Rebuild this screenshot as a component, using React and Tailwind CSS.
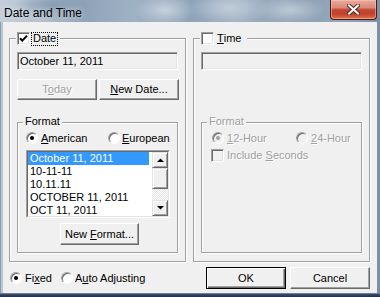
import React from "react";

function U({ children }) {
  return <span className="underline underline-offset-[1px] decoration-1">{children}</span>;
}

function Radio({ checked, disabled }) {
  return (
    <span
      className={
        disabled
          ? "inline-flex w-[12px] h-[12px] shrink-0 rounded-full items-center justify-center border border-t-[#a0a0a0] border-l-[#a0a0a0] border-r-white border-b-white bg-[#f0f0f0] shadow-[inset_1px_1px_0_#696969]"
          : "inline-flex w-[12px] h-[12px] shrink-0 rounded-full items-center justify-center border border-t-[#a0a0a0] border-l-[#a0a0a0] border-r-white border-b-white bg-white shadow-[inset_1px_1px_0_#696969]"
      }
    >
      {checked && (
        <span className={disabled ? "w-[4px] h-[4px] rounded-full bg-[#a0a0a0]" : "w-[4px] h-[4px] rounded-full bg-black"} />
      )}
    </span>
  );
}

function Check({ checked, disabled }) {
  return (
    <span
      className={
        disabled
          ? "inline-flex w-[13px] h-[13px] shrink-0 items-center justify-center border border-t-[#a0a0a0] border-l-[#a0a0a0] border-r-white border-b-white bg-[#f0f0f0] shadow-[inset_1px_1px_0_#696969,inset_-1px_-1px_0_#e3e3e3]"
          : "inline-flex w-[13px] h-[13px] shrink-0 items-center justify-center border border-t-[#a0a0a0] border-l-[#a0a0a0] border-r-white border-b-white bg-white shadow-[inset_1px_1px_0_#696969,inset_-1px_-1px_0_#e3e3e3]"
      }
    >
      {checked && (
        <svg width="9" height="9" viewBox="0 0 9 9">
          <path d="M1 4.2 L3.3 6.6 L8 1.6" stroke="black" strokeWidth="2" fill="none" />
        </svg>
      )}
    </span>
  );
}

function Btn({ children, className = "", disabled }) {
  return (
    <div
      className={
        "flex items-center justify-center bg-[#f0f0f0] border border-t-white border-l-white border-r-[#696969] border-b-[#696969] shadow-[inset_-1px_-1px_0_#a0a0a0] " +
        (disabled ? "text-[#a0a0a0] [text-shadow:1px_1px_0_#fff] " : "text-black ") +
        className
      }
    >
      <span className="whitespace-pre">{children}</span>
    </div>
  );
}

function Field({ children }) {
  return (
    <div className="w-[161px] h-[18px] flex items-center pl-[2px] bg-[#f0f0f0] border border-t-[#a0a0a0] border-l-[#a0a0a0] border-r-white border-b-white shadow-[inset_1px_1px_0_#696969,inset_-1px_-1px_0_#e3e3e3]">
      {children}
    </div>
  );
}

function Arrow({ up }) {
  return (
    <svg width="7" height="4" viewBox="0 0 7 4">
      {up ? <polygon points="0,4 7,4 3.5,0.5" fill="black" /> : <polygon points="0,0 7,0 3.5,3.5" fill="black" />}
    </svg>
  );
}

function SBtn({ children, className = "" }) {
  return (
    <div
      className={
        "flex items-center justify-center bg-[#f0f0f0] border border-t-[#e3e3e3] border-l-[#e3e3e3] border-r-[#696969] border-b-[#696969] shadow-[inset_1px_1px_0_#fff,inset_-1px_-1px_0_#a0a0a0] " +
        className
      }
    >
      {children}
    </div>
  );
}

export default function App() {
  const items = ["October 11, 2011", "10-11-11", "10.11.11", "OCTOBER 11, 2011", "OCT 11, 2011"];
  return (
    <div className="w-[380px] h-[297px] flex flex-col overflow-hidden bg-[#7d8fa6] font-['Liberation_Sans',Arial,sans-serif] text-[11px] leading-none text-black">
      {/* Title bar */}
      <div className="relative h-[22px] shrink-0 flex items-start pl-[4px] pt-[7px] bg-[radial-gradient(ellipse_40px_14px_at_55px_6px,#8398b0,transparent),radial-gradient(ellipse_30px_16px_at_165px_10px,#c6d1dc,transparent),radial-gradient(ellipse_40px_16px_at_230px_8px,#c1ccd8,transparent),radial-gradient(ellipse_35px_14px_at_290px_10px,#bdc9d5,transparent),linear-gradient(90deg,#c3ced9_0%,#aebdcc_12%,#8fa3b9_22%,#9fb1c4_35%,#8ea2b8_50%,#a0b1c3_62%,#8c9fb5_78%,#93a6ba_90%,#7c90a8_100%)]">
        <span className="relative text-[12px] leading-none [text-shadow:0_0_6px_rgba(255,255,255,0.9)]">Date and Time</span>
        <div className="absolute left-[330px] top-0 w-[47px] h-[20px] rounded-b-[4px] border border-t-0 border-[#4a1c16] shadow-[inset_0_0_0_1px_rgba(255,200,190,0.5)] bg-[linear-gradient(180deg,#e9ab9d_0%,#d98a7a_40%,#c24530_52%,#c4432c_75%,#e07550_100%)] flex items-center justify-center">
          <svg width="13" height="11" viewBox="0 0 13 11">
            <path d="M2 1.5 L11 9.5 M11 1.5 L2 9.5" stroke="#5a2a22" strokeWidth="4" strokeLinecap="square" />
            <path d="M2 1.5 L11 9.5 M11 1.5 L2 9.5" stroke="#ffffff" strokeWidth="2" strokeLinecap="square" />
          </svg>
        </div>
      </div>

      {/* Body with frame */}
      <div className="flex-1 flex px-[3px] bg-[linear-gradient(90deg,#60728a_0px,#b9c6d4_1px,#b9c6d4_3px,transparent_3px)]">
        <div className="w-[374px] h-[271px] bg-[#f0f0f0] pl-[6px] pr-[7px] pt-[16px] flex flex-col">
          <div className="flex gap-[7px] items-start">
            {/* Date group */}
            <div className="relative w-[177px] h-[224px] border border-[#a0a0a0] shadow-[inset_1px_1px_0_#fff,1px_1px_0_#fff] pl-[7px] pt-[13px] flex flex-col">
              <div className="absolute left-[6px] top-[-8px] h-[15px] flex items-center gap-[1px] bg-[#f0f0f0] pl-[1px] pr-[2px]">
                <Check checked />
                <span className="h-[14px] flex items-center border border-dotted border-black px-[1px]">Date</span>
              </div>
              <Field>October 11, 2011</Field>
              <div className="flex gap-[2px] mt-[9px]">
                <Btn disabled className="w-[80px] h-[21px]">
                  T<U>o</U>day
                </Btn>
                <Btn className="w-[80px] h-[21px]">
                  <U>N</U>ew Date...
                </Btn>
              </div>
              {/* Format group */}
              <div className="relative mt-[22px] w-[161px] h-[131px] border border-[#a0a0a0] shadow-[inset_1px_1px_0_#fff,1px_1px_0_#fff] pl-[8px] pt-[9px] flex flex-col">
                <span className="absolute left-[5px] top-[-8px] bg-[#f0f0f0] px-[2px] leading-[13px]">Format</span>
                <div className="flex items-center h-[12px]">
                  <div className="w-[82px] flex items-center gap-[3px]">
                    <Radio checked />
                    <span>
                      <U>A</U>merican
                    </span>
                  </div>
                  <div className="flex items-center gap-[2px]">
                    <Radio />
                    <span>
                      <U>E</U>uropean
                    </span>
                  </div>
                </div>
                {/* List */}
                <div className="mt-[6px] w-[144px] h-[68px] border border-t-[#a0a0a0] border-l-[#a0a0a0] border-r-white border-b-white">
                  <div className="w-full h-full flex bg-white border border-t-[#696969] border-l-[#696969] border-r-[#e3e3e3] border-b-[#e3e3e3]">
                    <div className="flex-1 flex flex-col">
                      {items.map((t, i) => (
                        <div
                          key={t}
                          className={
                            i === 0
                              ? "h-[13px] leading-[13px] pl-[2px] bg-[#3399ff] text-white mr-[3px]"
                              : "h-[13px] leading-[13px] pl-[2px] whitespace-nowrap"
                          }
                        >
                          {t}
                        </div>
                      ))}
                    </div>
                    <div className="w-[16px] flex flex-col">
                      <SBtn className="h-[16px]">
                        <Arrow up />
                      </SBtn>
                      <SBtn className="h-[21px]" />
                      <div className="flex-1 bg-[repeating-conic-gradient(#ffffff_0%_25%,#e3e3e3_0%_50%)] bg-[length:2px_2px]" />
                      <SBtn className="h-[16px]">
                        <Arrow />
                      </SBtn>
                    </div>
                  </div>
                </div>
                <Btn className="mt-[5px] ml-[34px] w-[79px] h-[22px]">
                  New <U>F</U>ormat...
                </Btn>
              </div>
            </div>

            {/* Time group */}
            <div className="relative w-[177px] h-[224px] border border-[#a0a0a0] shadow-[inset_1px_1px_0_#fff,1px_1px_0_#fff] pl-[7px] pt-[13px] flex flex-col">
              <div className="absolute left-[6px] top-[-8px] h-[15px] flex items-center gap-[1px] bg-[#f0f0f0] pl-[1px] pr-[4px]">
                <Check />
                <span className="h-[14px] flex items-center border border-transparent px-[1px]">
                  <U>T</U>ime
                </span>
              </div>
              <Field />
              <div className="relative mt-[52px] w-[161px] h-[131px] border border-[#a0a0a0] shadow-[inset_1px_1px_0_#fff,1px_1px_0_#fff] pl-[10px] pt-[9px] flex flex-col text-[#a0a0a0] [text-shadow:1px_1px_0_#fff]">
                <span className="absolute left-[5px] top-[-8px] bg-[#f0f0f0] px-[2px] leading-[13px]">Format</span>
                <div className="flex items-center h-[12px]">
                  <div className="w-[84px] flex items-center gap-[3px]">
                    <Radio checked disabled />
                    <span>
                      <U>1</U>2-Hour
                    </span>
                  </div>
                  <div className="flex items-center gap-[3px]">
                    <Radio disabled />
                    <span>
                      <U>2</U>4-Hour
                    </span>
                  </div>
                </div>
                <div className="mt-[5px] -ml-[1px] flex items-center gap-[3px]">
                  <Check disabled />
                  <span>
                    Include <U>S</U>econds
                  </span>
                </div>
              </div>
            </div>
          </div>

          {/* Bottom row */}
          <div className="mt-[5px] h-[22px] flex items-center">
            <div className="ml-[1px] w-[51px] flex items-center gap-[3px]">
              <Radio checked />
              <span>
                Fi<U>x</U>ed
              </span>
            </div>
            <div className="flex items-center gap-[2px]">
              <Radio />
              <span>
                A<U>u</U>to Adjusting
              </span>
            </div>
            <div className="ml-auto flex gap-[4px]">
              <div className="w-[80px] h-[22px] flex items-center justify-center bg-[#f0f0f0] border border-black shadow-[inset_1px_1px_0_#fff,inset_-1px_-1px_0_#696969,inset_-2px_-2px_0_#a0a0a0]">
                OK
              </div>
              <Btn className="w-[80px] h-[22px]">Cancel</Btn>
            </div>
          </div>
        </div>
      </div>
      <div className="h-[4px] shrink-0 bg-[linear-gradient(180deg,#9fb0c4_0px,#3c4e6a_1px,#22304a_4px)]" />
    </div>
  );
}
